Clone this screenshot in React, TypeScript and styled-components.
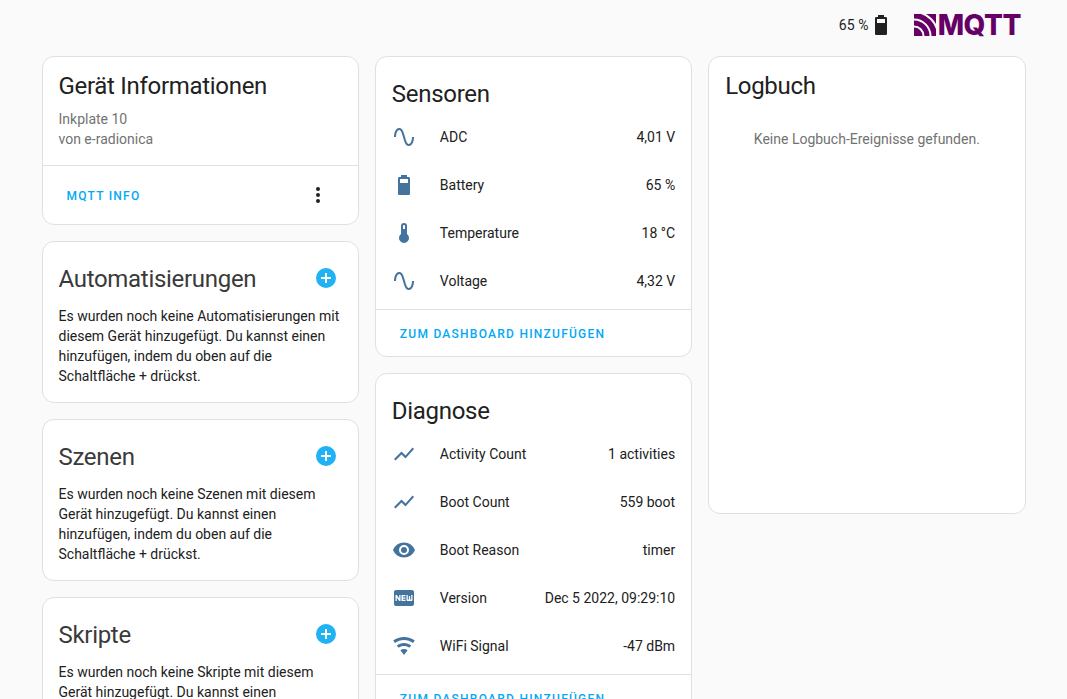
import React from "react";
import styled, { createGlobalStyle } from "styled-components";

const Global = createGlobalStyle`
  html, body { margin: 0; padding: 0; height: 100%; overflow: hidden; background: #fafafa; }
  body { font-family: Roboto, "Liberation Sans", sans-serif; color: #212121; }
`;

const P = {
  sine: "M16.5,21C13.5,21 12.31,16.76 11.05,12.28C10.14,9.04 9,5 7.5,5C4.11,5 4,11.93 4,12H2C2,11.63 2.06,3 7.5,3C10.5,3 11.71,7.25 12.97,11.74C13.83,14.8 15,19 16.5,19C19.94,19 20.03,12.07 20.03,12H22.03C22.03,12.37 21.97,21 16.5,21Z",
  battery: "M16,10H8V6H16M16.67,4H15V2H9V4H7.33A1.33,1.33 0 0,0 6,5.33V20.67C6,21.4 6.6,22 7.33,22H16.67A1.33,1.33 0 0,0 18,20.67V5.33C18,4.6 17.4,4 16.67,4Z",
  thermo: "M15 13V5A3 3 0 0 0 9 5V13A5 5 0 1 0 15 13M12 4A1 1 0 0 1 13 5V8H11V5A1 1 0 0 1 12 4Z",
  chart: "M3.5,18.5L9.5,12.5L13.5,16.5L22,6.92L20.59,5.5L13.5,13.5L9.5,9.5L2,17L3.5,18.5Z",
  eye: "M12,9A3,3 0 0,0 9,12A3,3 0 0,0 12,15A3,3 0 0,0 15,12A3,3 0 0,0 12,9M12,17A5,5 0 0,1 7,12A5,5 0 0,1 12,7A5,5 0 0,1 17,12A5,5 0 0,1 12,17M12,4.5C7,4.5 2.73,7.61 1,12C2.73,16.39 7,19.5 12,19.5C17,19.5 21.27,16.39 23,12C21.27,7.61 17,4.5 12,4.5Z",
  fresh: "M20,4C21.11,4 22,4.89 22,6V18C22,19.11 21.11,20 20,20H4C2.89,20 2,19.11 2,18V6C2,4.89 2.89,4 4,4H20M8.5,15V9H7.25V12.5L4.75,9H3.5V15H4.75V11.5L7.3,15H8.5M13.5,10.26V9H9.5V15H13.5V13.75H11V12.64H13.5V11.38H11V10.26H13.5M20.5,14V9H19.25V13.5H18.13V10H16.88V13.5H15.75V9H14.5V14A1,1 0 0,0 15.5,15H19.5A1,1 0 0,0 20.5,14Z",
  wifi: "M12,21L15.6,16.2C14.6,15.45 13.35,15 12,15C10.65,15 9.4,15.45 8.4,16.2L12,21M12,3C7.95,3 4.21,4.34 1.2,6.6L3,9C5.5,7.12 8.62,6 12,6C15.38,6 18.5,7.12 21,9L22.8,6.6C19.79,4.34 16.05,3 12,3M12,9C9.3,9 6.81,9.89 4.8,11.4L6.6,13.8C8.1,12.67 9.97,12 12,12C14.03,12 15.9,12.67 17.4,13.8L19.2,11.4C17.19,9.89 14.7,9 12,9Z",
  plus: "M17,13H13V17H11V13H7V11H11V7H13V11H17M12,2A10,10 0 0,0 2,12A10,10 0 0,0 12,22A10,10 0 0,0 22,12A10,10 0 0,0 12,2Z",
  dots: "M12,16A2,2 0 0,1 14,18A2,2 0 0,1 12,20A2,2 0 0,1 10,18A2,2 0 0,1 12,16M12,10A2,2 0 0,1 14,12A2,2 0 0,1 12,14A2,2 0 0,1 10,12A2,2 0 0,1 12,10M12,4A2,2 0 0,1 14,6A2,2 0 0,1 12,8A2,2 0 0,1 10,6A2,2 0 0,1 12,4Z",
};

const Svg = styled.svg<{ $size?: number; $color?: string }>`
  width: ${(p) => p.$size ?? 24}px;
  height: ${(p) => p.$size ?? 24}px;
  fill: ${(p) => p.$color ?? "#44739e"};
  flex: none;
  display: block;
`;

const Icon = ({ d, size, color }: { d: string; size?: number; color?: string }) => (
  <Svg viewBox="0 0 24 24" $size={size} $color={color}><path d={d} /></Svg>
);

const Page = styled.div`
  height: 699px;
  overflow: hidden;
  box-sizing: border-box;
`;
const TopBar = styled.header`
  height: 56px;
  display: flex;
  align-items: center;
  justify-content: flex-end;
  padding: 0 46px 6px 0;
  box-sizing: border-box;
`;
const BatteryText = styled.span`
  font-size: 14px;
  line-height: 20px;
  letter-spacing: 0.1px;
`;
const BatteryWrap = styled.div`
  display: flex;
  align-items: center;
  margin-right: 21px;
`;
const Logo = styled.div`
  display: flex;
  align-items: center;
  color: #660066;
  gap: 2px;
`;
const LogoMark = styled.svg`
  width: 22px;
  height: 22px;
  display: block;
  flex: none;
`;
const LogoText = styled.span`
  font-family: Inter, sans-serif;
  font-weight: 800;
  font-size: 28px;
  line-height: 26px;
  letter-spacing: -0.5px;
`;
const Columns = styled.main`
  display: grid;
  grid-template-columns: repeat(3, 1fr);
  gap: 16px;
  padding: 0 41.5px;
  align-items: start;
`;
const Column = styled.div`
  display: flex;
  flex-direction: column;
  gap: 16px;
  min-width: 0;
`;
const Card = styled.section<{ $minHeight?: number }>`
  background: #fff;
  border: 1px solid #e0e0e0;
  border-radius: 12px;
  box-sizing: border-box;
  min-height: ${(p) => p.$minHeight ?? 0}px;
`;
const Title = styled.h2<{ $soft?: boolean }>`
  margin: 0;
  font-size: 24px;
  font-weight: 400;
  line-height: 32px;
  letter-spacing: -0.3px;
  color: ${(p) => (p.$soft ? "#3a3a3a" : "#212121")};
`;
const InfoBody = styled.div`
  padding: 13px 16px 16px;
`;
const SubText = styled.div`
  font-size: 14px;
  line-height: 20px;
  color: #727272;
`;
const InfoLines = styled.div`
  margin-top: 7px;
`;
const Actions = styled.div`
  border-top: 1px solid #e0e0e0;
  height: 58px;
  display: flex;
  align-items: center;
  justify-content: space-between;
  padding: 0 28px 0 24px;
`;
const ActionLink = styled.a`
  font-size: 12px;
  font-weight: 500;
  letter-spacing: 1.25px;
  text-transform: uppercase;
  color: #03a9f4;
  margin-top: 2px;
`;
const SectionHead = styled.div`
  display: flex;
  align-items: center;
  justify-content: space-between;
  padding: 21px 20px 0 16px;
`;
const AddIcon = styled.span`
  display: block;
  margin-bottom: 2px;
`;
const SectionText = styled.p`
  margin: 11px 0 0;
  padding: 0 16px 16px;
  font-size: 14px;
  line-height: 20px;
  color: #212121;
`;
const EntityTitle = styled(Title)`
  padding: 21px 16px 0;
`;
const Rows = styled.div`
  padding: 3px 0 4px;
`;
const Row = styled.div`
  height: 48px;
  display: flex;
  align-items: center;
  padding: 0 16px;
  font-size: 14px;
`;
const RowLabel = styled.span`
  margin-left: 24px;
  flex: 1;
`;
const RowValue = styled.span`
  text-align: right;
`;
const CardFooter = styled.div`
  border-top: 1px solid #e0e0e0;
  height: 46px;
  display: flex;
  align-items: center;
  padding: 0 24px;
`;
const EmptyLog = styled.div`
  text-align: center;
  font-size: 14px;
  line-height: 20px;
  color: #727272;
  padding: 27px 16px 16px;
`;
const LogTitle = styled(Title)`
  padding: 13px 16px 0;
`;

type E = { icon: string; label: string; value: string };
const sensors: E[] = [
  { icon: P.sine, label: "ADC", value: "4,01 V" },
  { icon: P.battery, label: "Battery", value: "65 %" },
  { icon: P.thermo, label: "Temperature", value: "18 °C" },
  { icon: P.sine, label: "Voltage", value: "4,32 V" },
];
const diagnostics: E[] = [
  { icon: P.chart, label: "Activity Count", value: "1 activities" },
  { icon: P.chart, label: "Boot Count", value: "559 boot" },
  { icon: P.eye, label: "Boot Reason", value: "timer" },
  { icon: P.fresh, label: "Version", value: "Dec 5 2022, 09:29:10" },
  { icon: P.wifi, label: "WiFi Signal", value: "-47 dBm" },
];

const EntityCard = ({ title, items }: { title: string; items: E[] }) => (
  <Card>
    <EntityTitle>{title}</EntityTitle>
    <Rows>
      {items.map((e) => (
        <Row key={e.label}>
          <Icon d={e.icon} />
          <RowLabel>{e.label}</RowLabel>
          <RowValue>{e.value}</RowValue>
        </Row>
      ))}
    </Rows>
    <CardFooter><ActionLink>Zum Dashboard hinzufügen</ActionLink></CardFooter>
  </Card>
);

const AddCard = ({ title, text }: { title: string; text: string }) => (
  <Card>
    <SectionHead>
      <Title $soft>{title}</Title>
      <AddIcon><Icon d={P.plus} color="#1fb2f5" /></AddIcon>
    </SectionHead>
    <SectionText>{text}</SectionText>
  </Card>
);

const arcs = [9.5, 16.5, 24];

export default function App() {
  return (
    <Page>
      <Global />
      <TopBar>
        <BatteryWrap>
          <BatteryText>65 %</BatteryText>
          <Icon d={P.battery} color="#212121" />
        </BatteryWrap>
        <Logo>
          <LogoMark viewBox="0 0 22 22">
            <rect width="22" height="22" fill="#660066" />
            {arcs.map((r) => (
              <circle key={r} cx="0" cy="22" r={r} fill="none" stroke="#fafafa" strokeWidth="2" />
            ))}
          </LogoMark>
          <LogoText>MQTT</LogoText>
        </Logo>
      </TopBar>
      <Columns>
        <Column>
          <Card>
            <InfoBody>
              <Title>Gerät Informationen</Title>
              <InfoLines>
                <SubText>Inkplate 10</SubText>
                <SubText>von e-radionica</SubText>
              </InfoLines>
            </InfoBody>
            <Actions>
              <ActionLink>MQTT Info</ActionLink>
              <Icon d={P.dots} color="#212121" />
            </Actions>
          </Card>
          <AddCard title="Automatisierungen" text="Es wurden noch keine Automatisierungen mit diesem Gerät hinzugefügt. Du kannst einen hinzufügen, indem du oben auf die Schaltfläche + drückst." />
          <AddCard title="Szenen" text="Es wurden noch keine Szenen mit diesem Gerät hinzugefügt. Du kannst einen hinzufügen, indem du oben auf die Schaltfläche + drückst." />
          <AddCard title="Skripte" text="Es wurden noch keine Skripte mit diesem Gerät hinzugefügt. Du kannst einen hinzufügen, indem du oben auf die Schaltfläche + drückst." />
        </Column>
        <Column>
          <EntityCard title="Sensoren" items={sensors} />
          <EntityCard title="Diagnose" items={diagnostics} />
        </Column>
        <Column>
          <Card $minHeight={458}>
            <LogTitle>Logbuch</LogTitle>
            <EmptyLog>Keine Logbuch-Ereignisse gefunden.</EmptyLog>
          </Card>
        </Column>
      </Columns>
    </Page>
  );
}
